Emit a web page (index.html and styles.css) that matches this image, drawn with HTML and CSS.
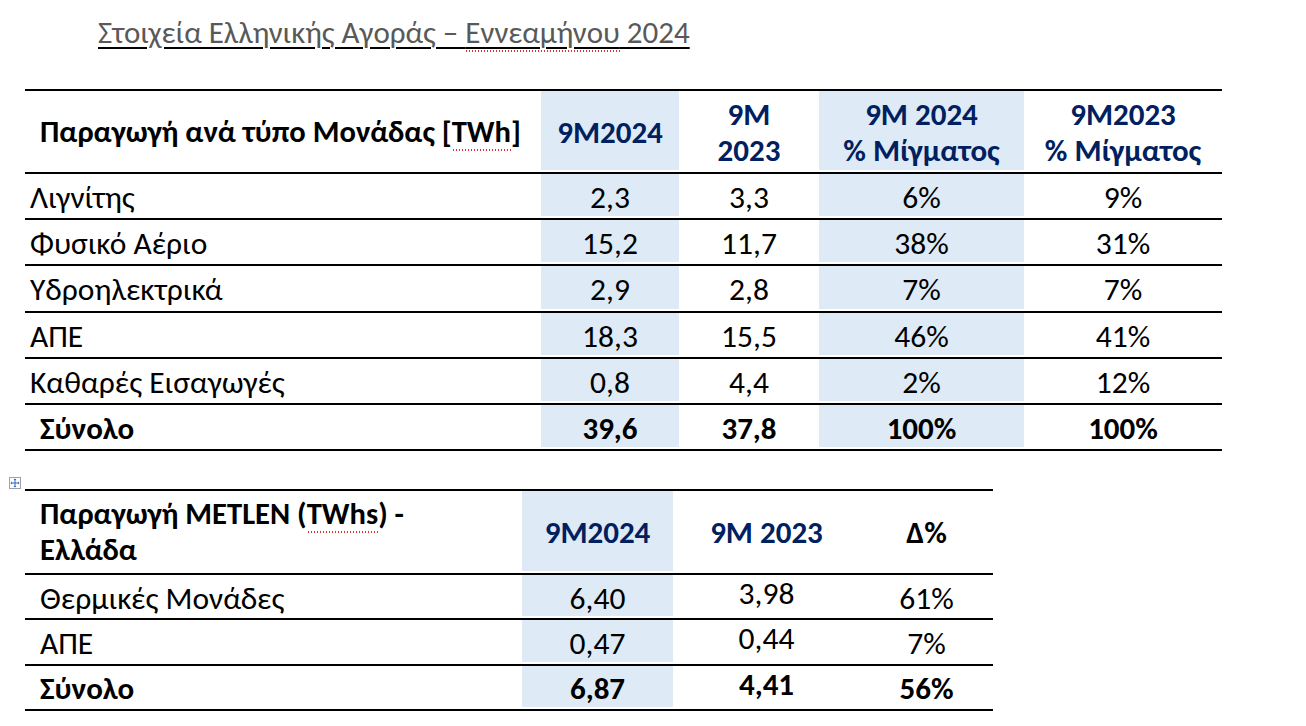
FILE: index.html
```html
<!DOCTYPE html>
<html lang="el">
<head>
<meta charset="utf-8">
<title>Στοιχεία Ελληνικής Αγοράς</title>
<link rel="stylesheet" href="styles.css">
</head>
<body>
<div class="page">
  <h1 class="title">Στοιχεία Ελληνικής Αγοράς – <span class="spell">Εννεαμήνου</span> 2024</h1>

  <table class="grid grid-market">
    <colgroup>
      <col class="c-label1"><col class="c-a1"><col class="c-b1"><col class="c-c1"><col class="c-d1">
    </colgroup>
    <thead>
      <tr class="head">
        <th class="lbl head-lbl">Παραγωγή ανά τύπο Μονάδας [<span class="spell">TWh</span>]</th>
        <th class="shade">9M2024</th>
        <th>9M<br>2023</th>
        <th class="shade">9M 2024<br>% Μίγματος</th>
        <th>9M2023<br>% Μίγματος</th>
      </tr>
    </thead>
    <tbody>
      <tr><td class="lbl">Λιγνίτης</td><td class="shade">2,3</td><td>3,3</td><td class="shade">6%</td><td>9%</td></tr>
      <tr><td class="lbl">Φυσικό Αέριο</td><td class="shade">15,2</td><td>11,7</td><td class="shade">38%</td><td>31%</td></tr>
      <tr><td class="lbl">Υδροηλεκτρικά</td><td class="shade">2,9</td><td>2,8</td><td class="shade">7%</td><td>7%</td></tr>
      <tr><td class="lbl">ΑΠΕ</td><td class="shade">18,3</td><td>15,5</td><td class="shade">46%</td><td>41%</td></tr>
      <tr><td class="lbl">Καθαρές Εισαγωγές</td><td class="shade">0,8</td><td>4,4</td><td class="shade">2%</td><td>12%</td></tr>
      <tr class="total"><td class="lbl head-lbl">Σύνολο</td><td class="shade">39,6</td><td>37,8</td><td class="shade">100%</td><td>100%</td></tr>
    </tbody>
  </table>

  <div class="table-wrap">
    <span class="move-handle" aria-hidden="true">
      <svg width="12" height="12" viewBox="0 0 12 12">
        <rect x="0.5" y="0.5" width="11" height="11" fill="#fff" stroke="#a0a0a0"/>
        <path d="M6 2v8M2 6h8" stroke="#2b66c9" stroke-width="1"/>
        <path d="M6 1.5l-1.5 1.5h3zM6 10.5l-1.5-1.5h3zM1.5 6l1.5-1.5v3zM10.5 6l-1.5-1.5v3z" fill="#2b66c9"/>
      </svg>
    </span>
    <table class="grid grid-metlen">
      <colgroup>
        <col class="c-label2"><col class="c-a2"><col class="c-b2"><col class="c-c2">
      </colgroup>
      <thead>
        <tr class="head head2">
          <th class="lbl head-lbl">Παραγωγή METLEN (<span class="spell">TWhs</span>) -<br>Ελλάδα</th>
          <th class="shade">9M2024</th>
          <th>9M 2023</th>
          <th class="black">Δ%</th>
        </tr>
      </thead>
      <tbody>
        <tr><td class="lbl head-lbl">Θερμικές Μονάδες</td><td class="shade">6,40</td><td class="up">3,98</td><td>61%</td></tr>
        <tr><td class="lbl head-lbl">ΑΠΕ</td><td class="shade">0,47</td><td class="up">0,44</td><td>7%</td></tr>
        <tr class="total"><td class="lbl head-lbl">Σύνολο</td><td class="shade">6,87</td><td class="up">4,41</td><td>56%</td></tr>
      </tbody>
    </table>
    <span class="resize-handle" aria-hidden="true"></span>
  </div>
</div>
</body>
</html>
```

FILE: styles.css
```css
html, body {
  margin: 0;
  padding: 0;
  background: #ffffff;
}

body {
  font-family: Carlito, "Open Sans", "Noto Sans", sans-serif;
  color: #000;
}

.page {
  padding: 12px 0 0 25px;
}

.title {
  margin: 0 0 0 73px;
  font-size: 31px;
  font-weight: 400;
  color: #595959;
  text-decoration: underline;
  text-decoration-thickness: 2px;
  text-underline-offset: 4px;
  text-decoration-color: #000;
  line-height: 40px;
}

.spell {
  background-image: radial-gradient(circle, #e03030 0.8px, transparent 1px);
  background-size: 3px 2px;
  background-repeat: repeat-x;
  background-position: 0 100%;
  padding-bottom: 1px;
}

.grid {
  border-collapse: collapse;
  table-layout: fixed;
  font-size: 31.5px;
}

.grid-market {
  margin-top: 37px;
  width: 1197px;
}

.c-label1 { width: 516px; }
.c-a1 { width: 138px; }
.c-b1 { width: 140px; }
.c-c1 { width: 205px; }
.c-d1 { width: 198px; }

.grid tr {
  border-bottom: 2px solid #000;
}

.grid thead tr {
  border-top: 2px solid #000;
}

.grid th,
.grid td {
  padding: 0;
  text-align: center;
  vertical-align: middle;
  line-height: 36px;
}

.grid td {
  height: 42.2px;
  padding-top: 2px;
}

.grid th {
  font-weight: 700;
  font-size: 31px;
  color: #002060;
  height: 81px;
}

.grid th.lbl {
  font-size: 30.6px;
}

.grid th.lbl,
.grid th.black {
  color: #000;
}

.grid .lbl {
  text-align: left;
  padding-left: 5px;
}

.grid .head-lbl {
  padding-left: 15px;
}

.grid .shade {
  background: linear-gradient(#deeaf6, #deeaf6) top left / 100% calc(100% - 2px) no-repeat;
}

.grid .total td {
  font-weight: 700;
  font-size: 31px;
}

.table-wrap {
  position: relative;
  margin-top: 38px;
  width: 968px;
}

.grid-metlen {
  width: 968px;
}

.c-label2 { width: 497px; }
.c-a2 { width: 151px; }
.c-b2 { width: 187px; }
.c-c2 { width: 133px; }

.grid .head2 th {
  height: 82px;
}

.grid-metlen td {
  height: 41.3px;
}

.grid td.up {
  vertical-align: top;
  padding-top: 0;
}

.move-handle {
  position: absolute;
  left: -16px;
  top: -12px;
  width: 12px;
  height: 12px;
  line-height: 0;
}

.resize-handle {
  position: absolute;
  right: -7px;
  bottom: -9px;
  width: 5px;
  height: 5px;
  border: 1px solid #8a8a8a;
  background: #fff;
}
```
